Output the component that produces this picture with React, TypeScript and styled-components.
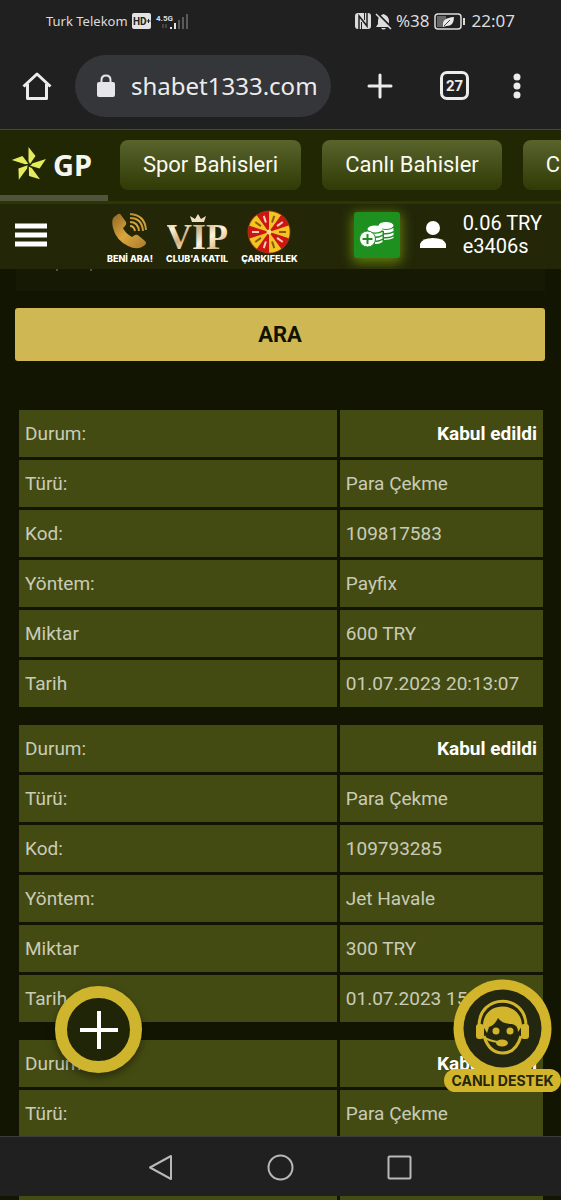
import React from "react";
import styled, { createGlobalStyle } from "styled-components";

const Global = createGlobalStyle`
  * { box-sizing: border-box; }
  body { margin: 0; background: #131503; font-family: Roboto, "Liberation Sans", sans-serif; }
  button { font: inherit; color: inherit; border: 0; padding: 0; background: none; cursor: pointer; }
  a { color: inherit; text-decoration: none; }
  svg { display: block; flex: none; }
`;

const Screen = styled.div`
  height: 100vh;
  display: flex;
  flex-direction: column;
  overflow: hidden;
  position: relative;
`;

const StatusBar = styled.div`
  flex: none;
  height: 42px;
  padding: 0 46px;
  display: flex;
  align-items: center;
  justify-content: space-between;
  background: #202020;
  color: #dcdcdc;
  font-family: "Noto Sans", sans-serif;
`;

const StatusGroup = styled.div`
  display: flex;
  align-items: center;
  gap: 4px;
`;

const StatusText = styled.span<{ $size: number }>`
  font-size: ${(p) => p.$size}px;
  line-height: 20px;
  white-space: nowrap;
`;

const BrowserBar = styled.div`
  flex: none;
  height: 88px;
  padding: 0 40px 0 22px;
  display: flex;
  align-items: center;
  background: #202020;
  border-bottom: 1px solid #454842;
  color: #ececec;
`;

const Address = styled.a`
  flex: 1;
  max-width: 256px;
  height: 62px;
  margin-left: 23px;
  padding-left: 22px;
  border-radius: 31px;
  background: #35363a;
  display: flex;
  align-items: center;
  gap: 16px;
  font: 24px/32px "Noto Sans", sans-serif;
`;

const BrowserActions = styled.div`
  margin-left: auto;
  display: flex;
  align-items: center;
  gap: 44px;
`;

const TabCount = styled.button`
  width: 29px;
  height: 29px;
  border: 3px solid #ececec;
  border-radius: 7px;
  font: 700 15px/20px Roboto, sans-serif;
  text-align: center;
`;

const SiteTabs = styled.nav`
  flex: none;
  height: 74px;
  display: flex;
  align-items: stretch;
  overflow: hidden;
  background: #212603;
  border-bottom: 3px solid #2e3605;
`;

const LogoTab = styled.a`
  flex: none;
  width: 108px;
  height: 71px;
  padding: 4px 0 0 11px;
  border-bottom: 6px solid #50543b;
  display: flex;
  align-items: center;
  gap: 6px;
  color: #f6f6f0;
  font: 700 29px/36px "Noto Sans", sans-serif;
`;

const TabList = styled.div`
  flex: none;
  display: flex;
  gap: 21px;
  padding: 10px 0 0 12px;
`;

const SiteTab = styled.a<{ $width: number }>`
  width: ${(p) => p.$width}px;
  height: 50px;
  border-radius: 8px;
  background: linear-gradient(#59632c, #303a05);
  color: #fbfbf2;
  font-size: 22px;
  line-height: 50px;
  text-align: center;
`;

const Header = styled.header`
  flex: none;
  height: 65px;
  padding: 0 19px 0 15px;
  display: flex;
  align-items: center;
  background: #232708;
  color: #fff;
`;

const MenuButton = styled.button`
  margin-bottom: 4px;
`;

const Promos = styled.div`
  display: flex;
  gap: 13px;
  margin-left: 60px;
`;

const Promo = styled.a`
  display: flex;
  flex-direction: column;
  align-items: center;
  justify-content: flex-end;
  height: 54px;
  font: 800 9px/10px Inter, sans-serif;
  white-space: nowrap;
`;

const Account = styled.div`
  margin: 0 0 4px auto;
  display: flex;
  align-items: center;
  font-size: 20px;
  line-height: 23px;
`;

const Deposit = styled.button`
  width: 46px;
  height: 46px;
  margin-right: 19px;
  display: grid;
  place-items: center;
  border-radius: 3px;
  background: #1d9020;
  box-shadow: 0 3px 12px 2px #5f7a0c;
`;

const Balance = styled.div`
  margin-left: 16px;
  white-space: nowrap;
`;

const Main = styled.main`
  flex: 1;
  min-height: 0;
  overflow: hidden;
  background: #131503;
`;

const FieldEdge = styled.div`
  height: 22px;
  margin: 0 16px 17px;
  padding-left: 40px;
  background: #161904;
`;

const Search = styled.button`
  display: block;
  width: calc(100% - 31px);
  height: 53px;
  margin: 0 16px 46px 15px;
  border-radius: 3px;
  background: #cfb853;
  color: #111300;
  font-size: 22px;
  font-weight: 700;
`;

const Record = styled.table`
  width: calc(100% - 31px);
  margin: 0 15px 12px 16px;
  table-layout: fixed;
  border-collapse: separate;
  border-spacing: 3px;
  font-size: 19px;
  line-height: 23px;
  color: #c9cbb9;
`;

const Label = styled.th`
  width: 61%;
  height: 47px;
  padding: 0 6px;
  background: #444b12;
  font-weight: 400;
  text-align: left;
`;

const Value = styled.td<{ $status?: boolean }>`
  height: 47px;
  padding: 0 6px;
  background: #444b12;
  white-space: nowrap;
  ${(p) => p.$status && "color: #fff; font-weight: 700; text-align: right;"}
`;

const SystemNav = styled.nav`
  flex: none;
  height: 60px;
  padding-top: 2px;
  display: flex;
  align-items: center;
  justify-content: center;
  gap: 92px;
  background: #202020;
  border-top: 1px solid #3a3c38;
`;

const PageEdge = styled.div`
  flex: none;
  height: 4px;
  padding: 0 18px 0 19px;
  display: grid;
  grid-template-columns: 61fr 39fr;
  gap: 3px;
  background: #131503;
`;

const EdgeCell = styled.div`
  background: #444b12;
`;

const AddButton = styled.button`
  position: absolute;
  left: 55px;
  bottom: 127px;
  width: 87px;
  height: 87px;
  display: grid;
  place-items: center;
  border: 12px solid #cfb52d;
  border-radius: 50%;
  background: #212507;
  box-shadow: 0 4px 8px rgba(0, 0, 0, 0.4);
`;

const Support = styled.button`
  position: absolute;
  right: 0;
  bottom: 108px;
  width: 117px;
  display: flex;
  flex-direction: column;
  align-items: center;
`;

const SupportLabel = styled.span`
  width: 100%;
  height: 23px;
  margin-top: -9px;
  border-radius: 12px;
  background: #d2b52b;
  color: #26260a;
  font: 700 14px/24px Inter, sans-serif;
  white-space: nowrap;
`;

type Entry = { code: string; method: string; amount: string; date: string };

const entries: Entry[] = [
  { code: "109817583", method: "Payfix", amount: "600 TRY", date: "01.07.2023 20:13:07" },
  { code: "109793285", method: "Jet Havale", amount: "300 TRY", date: "01.07.2023 15:42:10" },
];

const StarLogo = () => (
  <svg width="36" height="36" viewBox="0 0 36 36" fill="#e3ec5c" aria-hidden="true">
    {[0, 72, 144, 216, 288].map((a) => (
      <path key={a} d="M17.500 0L24.500 9L19 17L17.500 14Z" transform={`rotate(${a} 18 18)`} />
    ))}
  </svg>
);

const Wheel = () => {
  const slices = Array.from({ length: 10 }, (_, i) => i);
  return (
    <svg width="44" height="44" viewBox="-22 -22 44 44" aria-hidden="true">
      <circle r="21.500" fill="#9c3a14" />
      {slices.map((i) => (
        <g key={i} transform={`rotate(${i * 36 + 18})`}>
          <path d="M0 0L-6.400 -19.600A20.600 20.600 0 0 1 6.400 -19.600Z" fill={i % 2 ? "#cf1414" : "#f4c422"} />
          <path d="M0 -10V-17" stroke={i % 2 ? "#f6d3bd" : "#8b5a10"} strokeWidth="2" />
        </g>
      ))}
      <circle r="2.500" fill="#f3d88a" />
    </svg>
  );
};

const CallIcon = () => (
  <svg width="37" height="41" viewBox="0 0 37 41" aria-hidden="true">
    <defs>
      <linearGradient id="call" gradientUnits="userSpaceOnUse" x1="0" y1="0" x2="36" y2="36">
        <stop offset="0" stopColor="#8a611f" />
        <stop offset="0.500" stopColor="#dba63e" />
        <stop offset="1" stopColor="#a87828" />
      </linearGradient>
    </defs>
    <path fill="url(#call)" d="M3 4L7 1Q9 0 10 2L15 9Q16 11 14 13L12 15Q14 20 21 24L24 22Q26 21 28 23L34 28Q36 30 34 32L31 34Q25 37 17 33Q5 27 2 15Q0 7 3 4Z" />
    <g fill="none" stroke="url(#call)" strokeWidth="2">
      <path d="M19 13Q23 13 24 18" />
      <path d="M19 9Q27 9 28 18" />
      <path d="M19 5Q31 5 32 18" />
      <path d="M19 1Q34 2 35 17" />
    </g>
  </svg>
);

const VipIcon = () => (
  <svg width="61" height="40" viewBox="0 0 61 40" aria-hidden="true">
    <defs>
      <linearGradient id="vip" x1="0" y1="0" x2="1" y2="1">
        <stop offset="0" stopColor="#c9a068" />
        <stop offset="0.200" stopColor="#fbf2d8" />
        <stop offset="0.400" stopColor="#cfae7c" />
        <stop offset="0.600" stopColor="#fff4dc" />
        <stop offset="0.800" stopColor="#d9bb8a" />
        <stop offset="1" stopColor="#b0824a" />
      </linearGradient>
    </defs>
    <path fill="#eee1c0" d="M25 8L23 2L28 5L31 0L34 5L39 2L37 8Z" />
    <text x="30" y="35" textAnchor="middle" fill="url(#vip)" fontFamily="Liberation Serif, serif" fontWeight="700" fontSize="36">VIP</text>
  </svg>
);

const Coins = () => (
  <svg width="36" height="28" viewBox="0 0 36 28" aria-hidden="true">
    <g fill="#fff">
      <ellipse cx="27" cy="4.500" rx="7.500" ry="3.500" />
      <path d="M20 7Q27 11 34.500 7V10Q31 12.500 25 12V10Q21 9 20 7Z" />
      <path d="M25 13.500Q31 14 34.500 11.500V14Q31 16.500 25 16Z" />
      <path d="M25 17.500Q31 18 34.500 15.500V17Q31 19 25 19Z" />
      <ellipse cx="16" cy="8" rx="7.500" ry="3.500" />
      <path d="M13 12.500Q19 13.500 23.500 11V13.500Q20 16 15 15.500Z" />
      <path d="M16 17Q20 17.500 23.500 15V17.500Q20 20 16 19.500Z" />
      <path d="M16 21Q20 21.500 23.500 19V21Q20 23.500 16 23Z" />
    </g>
    <circle cx="8.500" cy="18" r="8" fill="#fff" stroke="#1d9020" />
    <path d="M8.500 13V23M3.500 18H13.500" stroke="#1d9020" strokeWidth="2" />
  </svg>
);

const Agent = () => (
  <svg width="99" height="99" viewBox="0 0 99 99" aria-hidden="true">
    <circle cx="49.500" cy="49.500" r="49" fill="#d2b52b" />
    <circle cx="49.500" cy="49.500" r="39" fill="#24270f" />
    <g fill="#d2b52b">
      <path d="M30 47C30 21 69 21 69 47L65 53Q65 46 59 45Q49 45 45 39Q42 46 36 48L34 54Z" />
      <rect x="23" y="45" width="8" height="15" rx="3" />
      <rect x="68" y="45" width="8" height="15" rx="3" />
      <circle cx="43" cy="52" r="3.500" />
      <circle cx="57" cy="52" r="3.500" />
      <ellipse cx="49" cy="64" rx="6" ry="3.500" />
    </g>
    <g fill="none" stroke="#d2b52b">
      <path d="M26 47C26 14 73 14 73 47" strokeWidth="3" />
      <path d="M31 57Q36 74 50 74Q63 74 68 57" strokeWidth="3" />
      <path d="M31 58Q36 62 45 63" strokeWidth="2" />
    </g>
  </svg>
);

const RecordTable = ({ entry }: { entry: Entry }) => (
  <Record>
    <tbody>
      <tr><Label scope="row">Durum:</Label><Value $status>Kabul edildi</Value></tr>
      <tr><Label scope="row">Türü:</Label><Value>Para Çekme</Value></tr>
      <tr><Label scope="row">Kod:</Label><Value>{entry.code}</Value></tr>
      <tr><Label scope="row">Yöntem:</Label><Value>{entry.method}</Value></tr>
      <tr><Label scope="row">Miktar</Label><Value>{entry.amount}</Value></tr>
      <tr><Label scope="row">Tarih</Label><Value>{entry.date}</Value></tr>
    </tbody>
  </Record>
);

export default function App() {
  return (
    <Screen>
      <Global />
      <StatusBar>
        <StatusGroup>
          <StatusText $size={13}>Turk Telekom</StatusText>
          <svg width="19" height="16" viewBox="0 0 19 16" aria-hidden="true">
            <rect width="19" height="16" rx="2" fill="#e2e2e2" />
            <text x="1" y="12" fontFamily="Roboto, sans-serif" fontWeight="700" fontSize="10" fill="#202020">HD</text>
            <path d="M14.500 8H18.500M16.500 6V10" stroke="#202020" />
          </svg>
          <svg width="33" height="17" viewBox="0 0 33 17" aria-hidden="true">
            <text x="1" y="8" fontFamily="Roboto, sans-serif" fontWeight="700" fontSize="8" fill="#dcdcdc">4.5G</text>
            <path d="M8 11V15M11 11V15" stroke="#6a6a6a" />
            <path d="M16 14V16M20 10V16" stroke="#e2e2e2" strokeWidth="2" />
            <path d="M24 7V16M28 4V16M32 1V16" stroke="#5a5a5a" strokeWidth="2" />
          </svg>
        </StatusGroup>
        <StatusGroup>
          <svg width="16" height="16" viewBox="0 0 16 16" aria-hidden="true">
            <rect width="16" height="16" rx="3" fill="#dcdcdc" />
            <path d="M4 16V3L12 13V0" fill="none" stroke="#202020" strokeWidth="1.500" />
            <path d="M6.500 16V9M9.500 7V0" stroke="#202020" />
          </svg>
          <svg width="17" height="17" viewBox="0 0 17 17" aria-hidden="true">
            <path d="M1 14L3 11V8Q3 3 8.500 1Q14 3 14 8V11L16 14Z" fill="#dcdcdc" />
            <path d="M6 15Q8.500 18 11 15Z" fill="#dcdcdc" />
            <path d="M2 0L17 15" stroke="#202020" strokeWidth="2" />
            <path d="M1 1L16 16" stroke="#dcdcdc" strokeWidth="1.500" />
          </svg>
          <StatusText $size={17}>%38</StatusText>
          <svg width="34" height="17" viewBox="0 0 34 17" aria-hidden="true">
            <rect x="1" y="1" width="26" height="15" rx="3" fill="none" stroke="#dcdcdc" strokeWidth="1.500" />
            <rect x="3" y="3" width="9" height="11" fill="#686868" />
            <path d="M9 12Q8 5 20 4Q20 14 11 13L9 14Z" fill="#e8e8e8" />
            <path d="M10 13L16 7" stroke="#444" />
            <path d="M30 5V12" stroke="#dcdcdc" strokeWidth="2" />
          </svg>
          <StatusText $size={17}>22:07</StatusText>
        </StatusGroup>
      </StatusBar>

      <BrowserBar>
        <button aria-label="Ana sayfa">
          <svg width="30" height="30" viewBox="0 0 30 30" fill="none" stroke="#ececec" strokeWidth="3" strokeLinejoin="round" aria-hidden="true">
            <path d="M1.500 15.500L15 3L28.500 15.500M5.500 13V27.500H24.500V13" />
          </svg>
        </button>
        <Address href="#">
          <svg width="18" height="23" viewBox="0 0 18 23" aria-hidden="true">
            <rect y="8" width="18" height="15" rx="2" fill="#e6e6e8" />
            <path d="M4.500 9V6Q4.500 1.500 9 1.500T13.500 6V9" fill="none" stroke="#e6e6e8" strokeWidth="2" />
          </svg>
          shabet1333.com
        </Address>
        <BrowserActions>
          <button aria-label="Yeni sekme">
            <svg width="32" height="26" viewBox="0 0 32 26" stroke="#ececec" strokeWidth="3" strokeLinecap="round" aria-hidden="true">
              <path d="M16 2V24M5 13H27" />
            </svg>
          </button>
          <TabCount>27</TabCount>
          <button aria-label="Menü">
            <svg width="8" height="26" viewBox="0 0 8 26" fill="#ececec" aria-hidden="true">
              <circle cx="4" cy="4" r="3.500" /><circle cx="4" cy="13" r="3.500" /><circle cx="4" cy="22" r="3.500" />
            </svg>
          </button>
        </BrowserActions>
      </BrowserBar>

      <SiteTabs>
        <LogoTab href="#"><StarLogo />GP</LogoTab>
        <TabList>
          <SiteTab href="#" $width={181}>Spor Bahisleri</SiteTab>
          <SiteTab href="#" $width={180}>Canlı Bahisler</SiteTab>
          <SiteTab href="#" $width={168}>Canlı Casino</SiteTab>
        </TabList>
      </SiteTabs>

      <Header>
        <MenuButton aria-label="Menü">
          <svg width="32" height="24" viewBox="0 0 32 24" stroke="#fff" strokeWidth="5" aria-hidden="true">
            <path d="M0 3H32M0 12H32M0 21H32" />
          </svg>
        </MenuButton>
        <Promos>
          <Promo href="#"><CallIcon />BENİ ARA!</Promo>
          <Promo href="#"><VipIcon />CLUB'A KATIL</Promo>
          <Promo href="#"><Wheel />ÇARKIFELEK</Promo>
        </Promos>
        <Account>
          <Deposit aria-label="Para yatır"><Coins /></Deposit>
          <svg width="28" height="28" viewBox="0 0 28 28" fill="#fff" aria-hidden="true">
            <circle cx="14" cy="7" r="7" />
            <path d="M1 27V23Q3 17 14 17T27 23V27Z" />
          </svg>
          <Balance>0.06 TRY<br />e3406s</Balance>
        </Account>
      </Header>

      <Main>
        <FieldEdge>
          <svg width="40" height="2" viewBox="0 0 40 2" aria-hidden="true">
            <path d="M0 1H2M34 1H36" stroke="#8b8d7c" />
          </svg>
        </FieldEdge>
        <Search>ARA</Search>
        {entries.map((e) => <RecordTable key={e.code} entry={e} />)}
        <Record>
          <tbody>
            <tr><Label scope="row">Durum:</Label><Value $status>Kabul edildi</Value></tr>
            <tr><Label scope="row">Türü:</Label><Value>Para Çekme</Value></tr>
          </tbody>
        </Record>
      </Main>

      <SystemNav>
        <button aria-label="Geri">
          <svg width="27" height="27" viewBox="0 0 27 27" fill="none" stroke="#b8b8b8" strokeWidth="2" strokeLinejoin="round" aria-hidden="true"><path d="M2 13.500L23 2V25Z" /></svg>
        </button>
        <button aria-label="Ana ekran">
          <svg width="27" height="27" viewBox="0 0 27 27" fill="none" stroke="#b8b8b8" strokeWidth="2" aria-hidden="true"><circle cx="13.500" cy="13.500" r="12" /></svg>
        </button>
        <button aria-label="Son uygulamalar">
          <svg width="27" height="27" viewBox="0 0 27 27" fill="none" stroke="#b8b8b8" strokeWidth="2" aria-hidden="true"><rect x="2.500" y="2.500" width="22" height="22" rx="1" /></svg>
        </button>
      </SystemNav>
      <PageEdge><EdgeCell /><EdgeCell /></PageEdge>

      <AddButton aria-label="Ekle">
        <svg width="38" height="38" viewBox="0 0 38 38" stroke="#fff" strokeWidth="4" aria-hidden="true"><path d="M19 0V38M0 19H38" /></svg>
      </AddButton>
      <Support>
        <Agent />
        <SupportLabel>CANLI DESTEK</SupportLabel>
      </Support>
    </Screen>
  );
}
